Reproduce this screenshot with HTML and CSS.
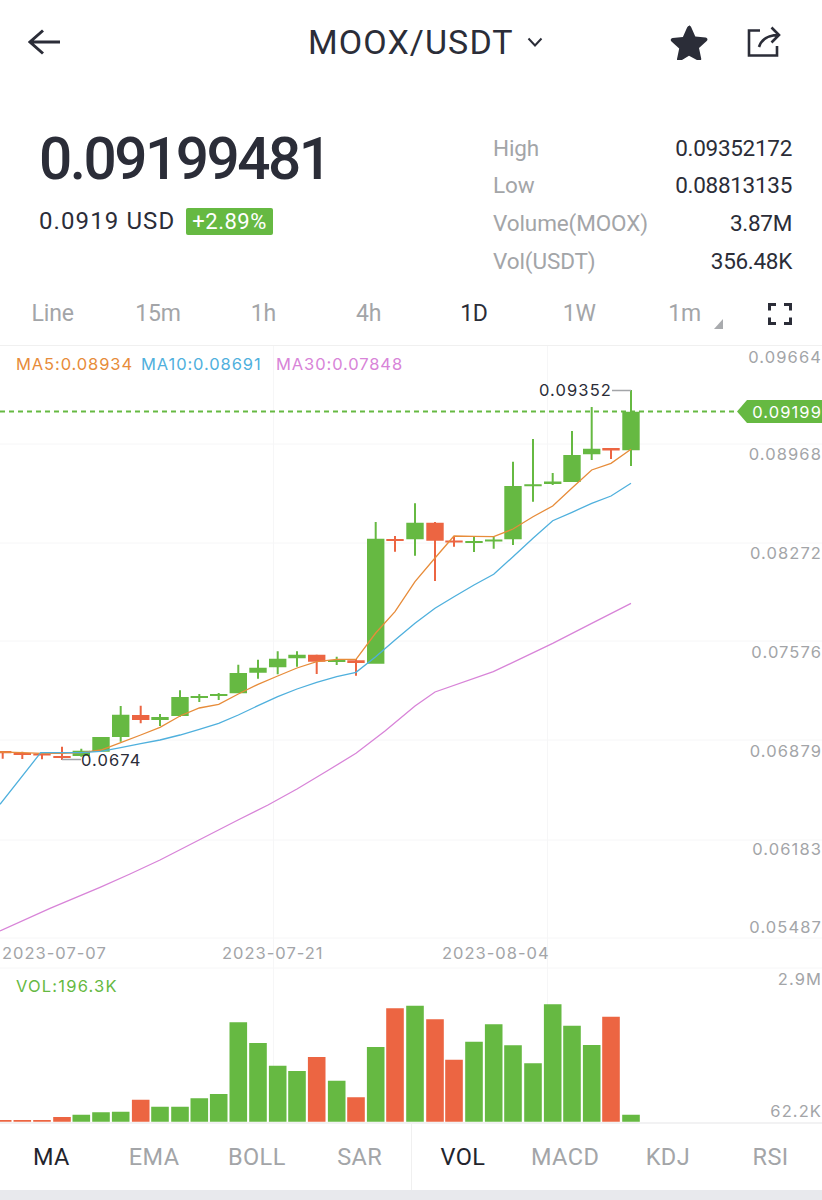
FILE: index.html
```html
<!DOCTYPE html>
<html lang="en">
<head>
<meta charset="utf-8">
<title>MOOX/USDT</title>
<link rel="stylesheet" href="styles.css">
</head>
<body>
<main class="page">
  <header class="topbar">
    <svg class="icon-back" viewBox="0 0 34 28"><path d="M2 14H32M15 2.5L2 14L15 25.5"/></svg>
    <div class="pair">
      <span class="pair-name">MOOX/USDT</span>
      <svg class="icon-chevron" viewBox="0 0 16 10"><path d="M1.5 1.5L8 8.5L14.5 1.5"/></svg>
    </div>
    <div class="actions">
      <svg class="icon-star" viewBox="0 0 38 36"><path d="M19 1.5c1 0 1.7.6 2.1 1.5l4.2 9.6 10.2 1c2 .2 2.6 2.3 1.200 3.500l-7.700 7 2.200 10.300c.4 2-1.500 3.200-3.200 2.200L19 31.700l-8.800 5.400c-1.700 1-3.600-.2-3.200-2.200l2.200-10.300-7.700-7c-1.400-1.200-.8-3.300 1.200-3.500l10.200-1 4.200-9.600c.4-.9 1.100-1.500 1.900-1.500z"/></svg>
      <svg class="icon-share" viewBox="0 0 34 32"><path d="M13 4.500H2V29.500H30V20M24.500 1.500L32 9L24.500 16.500M32 9C22 9 14.500 13 12 21"/></svg>
    </div>
  </header>

  <section class="summary">
    <div class="quote">
      <div class="price">0.09199481</div>
      <div class="quote-sub">
        <span class="usd">0.0919 USD</span>
        <span class="badge">+2.89%</span>
      </div>
    </div>
    <dl class="stats">
      <dt>High</dt><dd>0.09352172</dd>
      <dt>Low</dt><dd>0.08813135</dd>
      <dt>Volume(MOOX)</dt><dd>3.87M</dd>
      <dt>Vol(USDT)</dt><dd>356.48K</dd>
    </dl>
  </section>

  <nav class="ranges">
    <span class="range">Line</span>
    <span class="range">15m</span>
    <span class="range">1h</span>
    <span class="range">4h</span>
    <span class="range is-active">1D</span>
    <span class="range">1W</span>
    <span class="range range-more">1m</span>
    <svg class="icon-full" viewBox="0 0 24 22"><path d="M1.500 7.500V1.500H8M16 1.500H22.500V7.500M22.500 14.500V20.500H16M8 20.500H1.500V14.500"/></svg>
  </nav>

  <svg class="chart" viewBox="0 346 822 776">
    <path class="grid" d="M0 444H822M0 543H822M0 641H822M0 740H822M0 840H822M0 938H822M0 968H822M273.500 346V1122M547.500 346V1122"/>

    <text class="legend orange" x="16" y="370">MA5:0.08934</text>
    <text class="legend blue" x="141" y="370">MA10:0.08691</text>
    <text class="legend pink" x="276" y="370">MA30:0.07848</text>

    <g class="axis">
      <text x="822" y="363">0.09664</text>
      <text x="822" y="460">0.08968</text>
      <text x="822" y="559">0.08272</text>
      <text x="822" y="658">0.07576</text>
      <text x="822" y="757">0.06879</text>
      <text x="822" y="855">0.06183</text>
      <text x="822" y="933">0.05487</text>
      <text x="822" y="985">2.9M</text>
      <text x="822" y="1117">62.2K</text>
    </g>
    <g class="dates">
      <text x="2" y="959">2023-07-07</text>
      <text x="222" y="959">2023-07-21</text>
      <text x="442" y="959">2023-08-04</text>
    </g>

    <path class="last-line" d="M0 411.500H738"/>

    <path class="wick up-w" d="M631 390V466M591.700 407V460M572 431V482M552.700 473V485M533 439V501.700M513 461.700V545M493.700 536.700V548.700M474 537V552M415 503.300V555.700M375.700 522V663M336.700 656.700V665M297 651.300V666.700M277.700 651.300V674.300M258 659.700V678.700M238.300 664.700V693M218.700 693V700M199.300 694V702M180 690.300V716.700M160 714V726M120.700 706V741.700M81.300 748.700V756.700"/>
    <path class="wick down-w" d="M611 449V459M454 536V546.700M435 522V581M395 536V551.700M356 659V675.700M316.700 654.700V674M140.700 705.700V723.300M62 746.700V760M42 752.700V759.300M22.300 751.700V759M2.700 751V758.700"/>
    <path class="up" d="M622.300 411.700h17.400v38.600h-17.400zM583 448.700h17.400v5.600H583zM563.300 455h17.400v27h-17.400zM544 481.500h17.400v2.500H544zM524.300 484.300h17.400v2H524.300zM504.300 486h17.400v53.300h-17.400zM485 539.500h17.400v2H485zM465.300 541h17.400v2h-17.400zM406.300 522.700h17.400v16.600h-17.400zM367 538.700h17.400v125H367zM328 660h17.400v2H328zM288.300 654.700h17.400v3.600h-17.400zM269 658.700h17.400v8.600H269zM249.300 667.700h17.400v5H249.300zM229.600 673h17.400v20.300h-17.400zM210 694h17.400v2H210zM190.600 696h17.400v2h-17.400zM171.300 697h17.400v19h-17.400zM151.300 717h17.400v3h-17.400zM112 714.700h17.400V737H112zM92.300 737h17.400v14.700H92.300zM72.600 750.700h17.400v5.300H72.600z"/>
    <path class="down" d="M602.300 448h17.400v2.500h-17.400zM445.300 540.500h17.400v2h-17.400zM426.300 522.700h17.400v18h-17.400zM386.300 539h17.400v2h-17.400zM347.300 660.300h17.400v2.700h-17.400zM308 654.700h17.400v7H308zM132 715h17.400v5H132zM53.300 756h17.400v2H53.300zM33.300 753.500h17.400v2H33.300zM13.600 753h17.400v2H13.600zM-6 751h17.400v2.300H-6z"/>

    <polyline class="ma ma5" points="0,752 22.300,752.700 42,753.300 62,753.300 81.300,752.700 101,750 120.700,742.700 140.700,735 160,727.300 180,716 199.300,708 218.700,704.300 238.300,694 258,684.300 277.700,676 297,668 316.700,661.700 336.700,659.300 356,659.300 375.700,633 395,611.700 415,581.700 435,558 454,536 474,536.300 493.700,536.700 513,529 533,516.700 552.700,506 572,488 591.700,470 611,463.300 631,449.300"/>
    <polyline class="ma ma10" points="0,804.300 40.700,752.700 62,752.700 81.300,752.700 101,751.300 120.700,747.700 140.700,743.700 160,740 180,735 199.300,729.300 218.700,723.300 238.300,715 258,705.700 277.700,696.700 297,689 316.700,682.300 336.700,676.700 356,672.300 375.700,656.700 395,640 415,623.300 435,608.300 454,596.700 474,585 493.700,574.300 513,556.700 533,538.300 552.700,520.700 572,512.300 591.700,503.300 611,496 631,483.300"/>
    <polyline class="ma ma30" points="0,931 50,908.300 100,887.300 130,874 160,860 199,840 238,820 268,805 297,789 327,771 356,753.300 385,731 415,706 435,692 493.300,671.700 552.700,643.300 591.700,623.300 631,603.300"/>

    <path class="leader" d="M612 390.500H631M62 759.500H81"/>
    <text class="note" x="539" y="396">0.09352</text>
    <text class="note" x="81" y="766">0.0674</text>

    <polygon class="tag" points="737,411.500 747,400 822,400 822,423 747,423"/>
    <text class="tag-text" x="822" y="418">0.09199</text>

    <text class="legend vol-label" x="16" y="992">VOL:196.3K</text>
    <path class="up" d="M622.200 1114.700h17.600v7h-17.600zM582.900 1045h17.600v76.700h-17.600zM563.200 1025.700h17.600v96h-17.600zM543.900 1004.300h17.600v117.400h-17.600zM524.200 1063.300h17.600v58.400h-17.600zM504.200 1045.300h17.600v76.400h-17.600zM484.900 1024.300h17.600v97.400h-17.600zM465.200 1041.700h17.600v80h-17.600zM406.200 1005.700h17.600v116h-17.600zM366.900 1047h17.600v74.700h-17.600zM327.900 1080.700h17.600v41h-17.600zM288.200 1071h17.600v50.700h-17.600zM268.900 1065.700h17.600v56h-17.600zM249.200 1043h17.600v78.700h-17.600zM229.500 1022.300h17.600v99.400h-17.600zM209.900 1094h17.600v27.700h-17.600zM190.500 1098.300h17.600v23.400h-17.600zM171.200 1106.700h17.600v15h-17.600zM151.200 1106.700h17.600v15h-17.600zM111.900 1111.700h17.600v10h-17.600zM92.200 1112.300h17.600v9.400H92.200zM72.500 1114.700h17.600v7H72.500z"/>
    <path class="down" d="M602.200 1016.700h17.600v105h-17.600zM445.200 1059.700h17.600v62h-17.600zM426.200 1019.300h17.600v102.400h-17.600zM386.200 1008.300h17.600v113.400h-17.600zM347.200 1097.300h17.600v24.400h-17.600zM307.900 1057h17.600v64.700h-17.600zM131.900 1099.700h17.600v22h-17.600zM53.200 1117h17.600v4.700H53.200zM33.200 1120h17.600v1.700H33.200zM13.500 1120h17.600v1.700H13.500zM-6.100 1120h17.600v1.700H-6.100z"/>
  </svg>

  <nav class="indicators">
    <span class="indicator is-active">MA</span>
    <span class="indicator">EMA</span>
    <span class="indicator">BOLL</span>
    <span class="indicator">SAR</span>
    <span class="indicator indicator-split is-active">VOL</span>
    <span class="indicator">MACD</span>
    <span class="indicator">KDJ</span>
    <span class="indicator">RSI</span>
  </nav>
  <div class="footer-strip"></div>
</main>
</body>
</html>
```

FILE: styles.css
```css
* { box-sizing: border-box; }
html, body { margin: 0; padding: 0; background: #fff; }
body { font-family: Roboto, "Liberation Sans", sans-serif; color: #2b2d38; }
.page { width: 822px; height: 1200px; display: flex; flex-direction: column; overflow: hidden; }

.topbar { height: 84px; flex: none; display: flex; align-items: center; padding: 0 41px 0 28px; }
.icon-back { width: 34px; height: 28px; fill: none; stroke: #2b2d38; stroke-width: 3; flex: none; }
.pair { margin-left: 246px; display: flex; align-items: center; gap: 13px; }
.pair-name { font-size: 34px; line-height: 40px; letter-spacing: 1.100px; }
.icon-chevron { width: 16px; height: 10px; fill: none; stroke: #2b2d38; stroke-width: 2; }
.actions { margin-left: auto; display: flex; align-items: center; gap: 39px; }
.icon-star { width: 38px; height: 36px; fill: #2b2d38; }
.icon-share { width: 34px; height: 32px; fill: none; stroke: #2b2d38; stroke-width: 2.600; }

.summary { height: 206px; flex: none; display: flex; justify-content: space-between; padding: 45px 30px 0 39px; }
.price { font-size: 58.500px; line-height: 60px; font-weight: 500; letter-spacing: -2.500px; }
.quote-sub { margin-top: 18px; display: flex; align-items: center; gap: 11px; }
.usd { font-size: 24px; line-height: 28px; letter-spacing: 1.100px; }
.badge { height: 27px; padding: 0 6px; background: #66b942; color: #fff; border-radius: 2px; font-size: 22px; line-height: 27px; letter-spacing: .5px; }
.stats { margin: 0; width: 299px; display: grid; grid-template-columns: 1fr auto; grid-auto-rows: 37.600px; align-items: center; }
.stats dt { font-size: 22.500px; color: #a3a5a8; letter-spacing: -.1px; }
.stats dd { margin: 0; font-size: 22.500px; text-align: right; letter-spacing: -.3px; }

.ranges { height: 56px; flex: none; display: flex; align-items: center; border-bottom: 1px solid #f0f0f0; padding-bottom: 8px; padding-left: 0; }
.range { width: 105.400px; margin-left: -.07px; text-align: center; font-size: 23px; color: #a3a5a8; letter-spacing: -.2px; }
.range.is-active { color: #2b2d38; }
.range-more { position: relative; }
.range-more::after { content: ""; position: absolute; left: 82px; top: 19px; border-style: solid; border-width: 0 0 10px 9px; border-color: transparent transparent #a9abae transparent; }
.icon-full { width: 24px; height: 22px; margin-left: 30.500px; fill: none; stroke: #2b2d38; stroke-width: 3; }

.chart { display: block; width: 822px; height: 776px; flex: none; font-family: Inter, "Liberation Sans", sans-serif; }
.grid { stroke: #f6f6f7; stroke-width: 1; fill: none; }
.legend { font-size: 16.500px; letter-spacing: .9px; }
.orange { fill: #e78c3a; }
.blue { fill: #4fb0dd; }
.pink { fill: #d884d8; }
.vol-label { fill: #66b942; letter-spacing: 1.200px; }
.axis text { font-size: 16.500px; fill: #a3a5a8; text-anchor: end; letter-spacing: 1.100px; }
.dates text { font-size: 16.500px; fill: #a3a5a8; letter-spacing: 1px; }
.last-line { stroke: #66b942; stroke-width: 2; stroke-dasharray: 5 4; fill: none; }
.wick { fill: none; stroke-width: 2; }
.up-w { stroke: #66b942; }
.down-w { stroke: #ec6542; }
.up { fill: #66b942; }
.down { fill: #ec6542; }
.ma { fill: none; stroke-width: 1.300; }
.ma5 { stroke: #e78c3a; }
.ma10 { stroke: #4fb0dd; }
.ma30 { stroke: #d884d8; }
.leader { stroke: #a3a5a8; stroke-width: 1.300; fill: none; }
.note { font-size: 16.500px; fill: #2b2d38; letter-spacing: 1.100px; }
.tag { fill: #66b942; }
.tag-text { font-size: 16.500px; fill: #fff; text-anchor: end; letter-spacing: 1.100px; }

.indicators { height: 68px; flex: none; display: grid; grid-template-columns: repeat(8, 1fr); align-items: stretch; border-top: 2px solid #f2f2f3; }
.indicator { display: flex; align-items: center; justify-content: center; font-size: 23.500px; color: #a3a5a8; letter-spacing: .4px; }
.indicator.is-active { color: #23242c; }
.indicator-split { border-left: 1px solid #f0f0f0; }
.footer-strip { flex: 1; background: #e8e9ed; }
```
